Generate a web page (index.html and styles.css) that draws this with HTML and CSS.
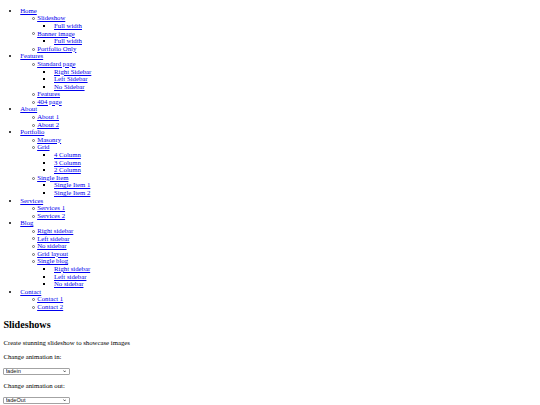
FILE: index.html
```html
<!DOCTYPE html>
<html lang="en">
<head>
<meta charset="utf-8">
<title>Slideshows</title>
<link rel="stylesheet" href="styles.css">
</head>
<body class="page">
<ul class="menu">
  <li><a href="#">Home</a>
    <ul>
      <li><a href="#">Slideshow</a>
        <ul><li><a href="#">Full width</a></li></ul>
      </li>
      <li><a href="#">Banner image</a>
        <ul><li><a href="#">Full width</a></li></ul>
      </li>
      <li><a href="#">Portfolio Only</a></li>
    </ul>
  </li>
  <li><a href="#">Features</a>
    <ul>
      <li><a href="#">Standard page</a>
        <ul>
          <li><a href="#">Right Sidebar</a></li>
          <li><a href="#">Left Sidebar</a></li>
          <li><a href="#">No Sidebar</a></li>
        </ul>
      </li>
      <li><a href="#">Features</a></li>
      <li><a href="#">404 page</a></li>
    </ul>
  </li>
  <li><a href="#">About</a>
    <ul>
      <li><a href="#">About 1</a></li>
      <li><a href="#">About 2</a></li>
    </ul>
  </li>
  <li><a href="#">Portfolio</a>
    <ul>
      <li><a href="#">Masonry</a></li>
      <li><a href="#">Grid</a>
        <ul>
          <li><a href="#">4 Column</a></li>
          <li><a href="#">3 Column</a></li>
          <li><a href="#">2 Column</a></li>
        </ul>
      </li>
      <li><a href="#">Single Item</a>
        <ul>
          <li><a href="#">Single Item 1</a></li>
          <li><a href="#">Single Item 2</a></li>
        </ul>
      </li>
    </ul>
  </li>
  <li><a href="#">Services</a>
    <ul>
      <li><a href="#">Services 1</a></li>
      <li><a href="#">Services 2</a></li>
    </ul>
  </li>
  <li><a href="#">Blog</a>
    <ul>
      <li><a href="#">Right sidebar</a></li>
      <li><a href="#">Left sidebar</a></li>
      <li><a href="#">No sidebar</a></li>
      <li><a href="#">Grid layout</a></li>
      <li><a href="#">Single blog</a>
        <ul>
          <li><a href="#">Right sidebar</a></li>
          <li><a href="#">Left sidebar</a></li>
          <li><a href="#">No sidebar</a></li>
        </ul>
      </li>
    </ul>
  </li>
  <li><a href="#">Contact</a>
    <ul>
      <li><a href="#">Contact 1</a></li>
      <li><a href="#">Contact 2</a></li>
    </ul>
  </li>
</ul>
<h2 class="title">Slideshows</h2>
<p class="text">Create stunning slideshow to showcase images</p>
<p class="text">Change animation in:</p>
<span class="select-wrap">
  <select class="anim">
    <option>fadein</option>
    <option>fadeInUp</option>
    <option>fadeInDown</option>
  </select>
  <svg class="chevron" viewBox="0 0 4 3" aria-hidden="true"><path d="M0.5 0.6 L2 2.2 L3.5 0.6"/></svg>
</span>
<p class="text">Change animation out:</p>
<span class="select-wrap">
  <select class="anim">
    <option>fadeOut</option>
    <option>fadeOutUp</option>
    <option>fadeOutDown</option>
  </select>
  <svg class="chevron" viewBox="0 0 4 3" aria-hidden="true"><path d="M0.5 0.6 L2 2.2 L3.5 0.6"/></svg>
</span>
</body>
</html>
```
FILE: styles.css
```css
.page {
  margin: 3.375px;
  font-family: "Liberation Serif", "Times New Roman", serif;
  font-size: 6.75px;
  line-height: 7.59px;
  color: #000;
  background: #fff;
}
.page a {
  color: #0000ee;
}
.menu {
  margin: 3.4px 0 6.75px;
  padding-left: 16.875px;
  list-style-type: disc;
}
.menu ul {
  margin: 0;
  padding-left: 16.875px;
}
.menu > li > ul > li {
  position: relative;
  list-style: none;
}
.menu > li > ul > li::before {
  content: "";
  position: absolute;
  left: -5.5px;
  top: 2.9px;
  box-sizing: border-box;
  width: 3px;
  height: 3px;
  border: 1px solid #6a6a6a;
  border-radius: 50%;
}
.menu ul ul {
  list-style-type: square;
}
.title {
  margin: 8.4px 0;
  font-size: 10.125px;
  line-height: 11.6px;
  font-weight: bold;
}
.text {
  margin: 6.75px 0;
}
.select-wrap {
  position: relative;
  display: inline-block;
  vertical-align: 1px;
}
.anim {
  -webkit-appearance: none;
  appearance: none;
  box-sizing: border-box;
  display: block;
  width: 66.5px;
  height: 7.9px;
  margin: 0;
  padding: 0 0 0 1.2px;
  font-family: "Liberation Sans", Arial, sans-serif;
  font-size: 5.6px;
  line-height: 5.9px;
  border: 1px solid #a3a3a3;
  border-radius: 1px;
  background: #fff;
  color: #111;
}
.chevron {
  position: absolute;
  right: 3.6px;
  top: 2.6px;
  width: 3.4px;
  height: 2.6px;
  fill: none;
  stroke: #222;
  stroke-width: 0.9;
  pointer-events: none;
}
```
